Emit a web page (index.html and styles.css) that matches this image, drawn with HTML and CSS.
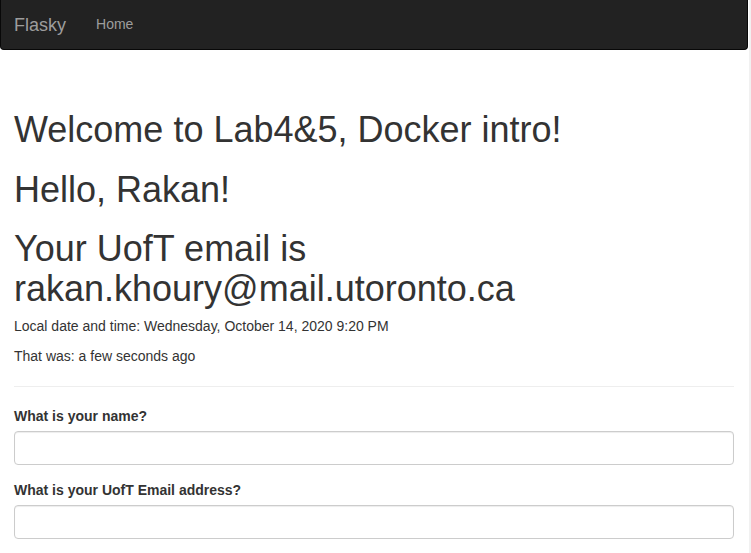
FILE: index.html
```html
<!DOCTYPE html>
<html lang="en">
<head>
<meta charset="utf-8">
<title>Flasky</title>
<link rel="stylesheet" href="styles.css">
</head>
<body>
<div class="page">
  <nav class="navbar">
    <a class="brand" href="#">Flasky</a>
    <a class="nav-link" href="#">Home</a>
  </nav>
  <div class="container">
    <h1>Welcome to Lab4&amp;5, Docker intro!</h1>
    <h1>Hello, Rakan!</h1>
    <h1 class="last-heading">Your UofT email is rakan.khoury@mail.utoronto.ca</h1>
    <p>Local date and time: Wednesday, October 14, 2020 9:20 PM</p>
    <p>That was: a few seconds ago</p>
    <hr class="divider">
    <form class="form">
      <div class="form-group">
        <label class="label" for="name">What is your name?</label>
        <input class="input" id="name" type="text">
      </div>
      <div class="form-group">
        <label class="label" for="email">What is your UofT Email address?</label>
        <input class="input" id="email" type="text">
      </div>
    </form>
  </div>
</div>
<div class="scrollstrip"></div>
</body>
</html>
```
FILE: styles.css
```css
* { box-sizing: border-box; }
html, body { margin: 0; padding: 0; }
body {
  display: flex;
  min-height: 100vh;
  background: #fff;
  font-family: "Liberation Sans", Arial, Helvetica, sans-serif;
  font-size: 14px;
  line-height: 20px;
  color: #333;
  overflow: hidden;
}
.page {
  flex: 1;
  min-width: 0;
}
.scrollstrip {
  width: 2px;
  background: #f1f1f1;
  flex: none;
}
.navbar {
  display: flex;
  align-items: center;
  height: 50px;
  margin-right: 1px;
  padding-left: 13px;
  background: #222;
  border: 1px solid #080808;
  border-top: 0;
  border-radius: 0 0 4px 4px;
  gap: 30px;
}
.brand {
  font-size: 18px;
  line-height: 20px;
  color: #9d9d9d;
  text-decoration: none;
  margin-top: 0;
}
.nav-link {
  font-size: 14px;
  line-height: 20px;
  color: #9d9d9d;
  text-decoration: none;
  margin-top: -1px;
}
.container {
  padding: 40px 15px 0 14px;
}
h1 {
  font-size: 36px;
  font-weight: 500;
  line-height: 1.1;
  margin: 20px 0 10px;
  color: #333;
}
.last-heading {
  margin-bottom: 8px;
}
p {
  margin: 0 0 10px;
}
.divider {
  border: 0;
  border-top: 1px solid #eee;
  margin: 20px 0 19px;
}
.form-group {
  margin-bottom: 15px;
}
.label {
  display: block;
  font-weight: bold;
  margin-bottom: 5px;
}
.input {
  display: block;
  width: 100%;
  height: 34px;
  padding: 6px 12px;
  font-family: inherit;
  font-size: 14px;
  color: #555;
  background: #fff;
  border: 1px solid #ccc;
  border-radius: 4px;
  box-shadow: inset 0 1px 1px rgba(0,0,0,.075);
}
```
